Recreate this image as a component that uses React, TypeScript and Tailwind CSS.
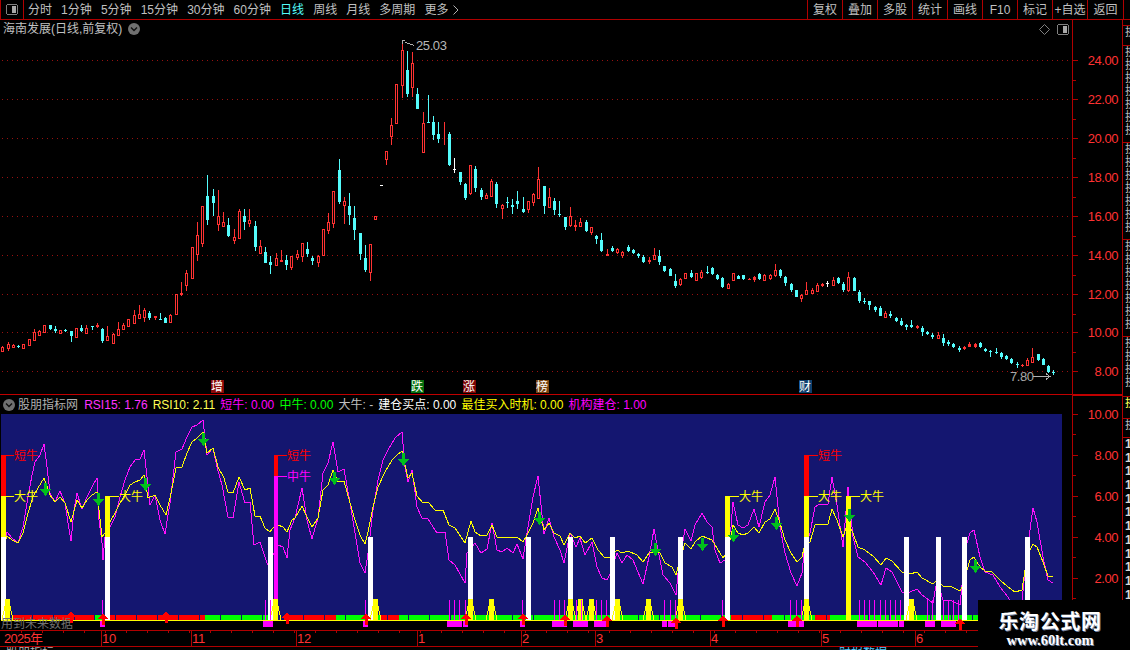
import React from "react";

const RED = "#ff3232";
const CYAN = "#54fcfc";
const LINE = "#b00000";

type C = [number, number, number, number, string?];
const A: C[] = [[618,621,632,632],[606,612,624,632],[613,616,620,620],[615,617,622,624,"c"],[612,613,623,623],[598,598,614,614],[568,576,599,599],[570,573,584,587],[556,556,576,576],[556,556,567,570,"c"],[558,567,572,579,"c"],[570,571,579,581],[566,570,573,577,"c"],[573,573,587,606,"c"],[565,565,590,590],[556,564,573,577,"c"],[556,564,579,582],[558,558,560,570,"c"],[550,555,561,565,"f"],[564,567,602,608,"c"],[559,589,599,600],[578,582,608,608],[546,568,584,584],[549,555,568,570],[538,538,558,560],[511,526,549,551],[495,523,533,533],[505,511,531,546],[514,519,534,540,"c"],[529,529,534,540,"f"],[519,538,540,540,"c"],[532,534,548,549,"c"],[522,525,546,548],[462,462,522,525],[427,460,465,467,"f"],[391,400,434,453],[322,322,413,413],[247,286,341,363],[199,199,308,321],[105,168,240,255,"c"],[148,168,189,229,"c"],[150,228,251,273],[217,247,258,262],[235,255,288,291,"c"],[267,292,300,312],[208,214,293,293],[208,228,246,270,"c"],[208,240,249,262],[244,259,321,333,"c"],[301,319,339,342],[322,336,369,369,"c"],[349,366,375,402,"c"],[340,355,375,378],[331,361,366,366,"f"],[346,360,375,390,"c"],[348,349,381,390],[331,343,351,360],[310,310,347,366],[306,327,343,350,"c"],[349,354,363,375,"c"],[345,349,365,381],[268,268,345,345],[220,247,269,282],[154,154,248,264],[57,91,186,192,"c"],[172,183,194,252],[159,198,225,255,"c"],[198,234,270,300,"c"],[279,279,342,360,"c"],[316,354,390,396,"c"],[313,313,395,423],[229,229,236,236],[135,135,137,137,"w"]];
const B: C[] = [[364,364,386,405],[265,286,317,345],[163,163,278,278],[40,61,164,204],[64,120,192,200,"c"],[67,100,170,200],[175,192,237,237,"c"],[247,280,365,365],[196,276,278,278,"c"],[259,276,315,330,"c"],[277,312,327,339,"c"],[277,320,345,345,"l"],[307,312,405,408,"c"],[385,417,419,428,"w"],[426,426,456,465,"c"],[460,462,504,510,"c"],[405,405,490,496],[408,417,474,486,"c"],[475,480,501,510,"c"],[490,495,505,507],[447,453,497,497],[457,462,522,534,"c"],[523,525,534,567],[501,516,519,534,"c"],[507,525,530,552,"c"],[483,513,522,537,"c"],[501,537,546,549,"c"],[514,514,537,549],[490,492,515,528],[411,447,504,504],[468,468,528,552,"c"],[474,502,531,531],[504,513,540,555,"c"],[514,552,555,561,"c"],[561,561,591,600,"c"],[531,558,585,591],[570,585,592,603,"f"],[564,576,588,591],[570,576,603,606,"c"],[591,591,606,615],[615,618,627,642,"c"],[609,630,663,666,"c"],[657,672,678,678,"f"],[648,655,663,666,"c"],[654,657,666,672],[663,666,675,684],[645,651,663,666,"c"],[657,660,669,672,"c"],[669,672,678,684,"c"],[675,681,696,699,"c"],[681,690,696,702,"f"],[654,675,687,690],[660,678,696,705,"c"]];
const D: C[] = [[108,108,123,126,"c"],[114,117,138,138,"c"],[132,153,168,174,"c"],[144,147,162,168],[129,129,144,144],[120,129,141,144,"c"],[129,129,150,150],[120,126,141,147],[108,126,129,132,"c"],[111,114,132,135,"c"],[132,135,147,150,"c"],[141,144,171,174,"c"],[159,162,174,174],[129,129,150,150],[135,138,147,147,"c"],[135,135,147,150,"c"],[144,147,150,150,"f"],[138,141,150,156,"f"],[129,132,147,150,"c"],[132,135,150,153],[132,135,144,150],[102,120,135,141],[117,120,138,144,"c"],[138,141,159,168,"c"],[159,162,180,186,"c"],[180,180,201,201,"c"],[192,195,204,216],[156,180,192,192],[174,180,189,189],[159,165,183,183],[159,162,168,171,"f"],[153,159,162,171,"w"],[141,150,165,168],[141,144,159,162,"c"],[156,162,180,186,"c"],[126,141,180,186],[141,144,183,183,"c"],[180,186,213,219,"c"],[204,213,216,222,"c"],[213,213,225,240,"c"],[228,231,240,246,"c"],[228,234,258,258,"c"],[243,249,261,264],[243,252,258,264,"c"],[261,264,273,276,"c"],[264,273,285,288,"c"],[282,285,291,300,"c"],[270,285,291,294,"c"],[285,288,294,297,"f"],[288,294,306,318,"c"],[303,306,312,315,"c"],[309,315,321,327,"c"],[306,315,324,327],[312,324,339,348,"c"],[330,336,342,348,"c"],[339,342,351,354,"c"],[348,354,360,366,"c"],[348,351,357,360,"f"],[336,342,351,351,"f"],[339,342,351,354,"f"],[336,339,351,354,"c"],[354,357,363,366,"c"],[360,363,363,381,"c"],[354,366,369,372,"c"],[366,369,381,387,"c"],[375,378,387,390,"c"],[384,387,399,402,"c"],[396,402,405,414,"c"],[402,405,408,411,"f"],[384,390,405,405],[354,381,396,396],[372,372,390,393,"c"],[384,387,405,405,"c"],[405,408,426,429,"c"],[420,426,429,435,"c"]];
const candles = [
  ...A.map((c) => ({ c, off: 140 })),
  ...B.map((c) => ({ c, off: 30 })),
  ...D.map((c) => ({ c, off: 230 })),
];

const mA = [15,395,22,365,35,385,55,400,70,350,80,280,95,195,105,155,120,135,133,103,140,170,150,250,165,275,180,243,195,280,205,340,212,392,222,300,230,250,245,298,260,260,275,230,292,205,298,330,305,400,308,450,315,380,330,350,345,320,360,260,375,210,390,170,405,150,420,147,433,120,440,200,450,285,465,255,480,330,495,373,510,280,528,125,545,118,560,80,575,50,590,45,608,30,620,135,638,115,650,170,665,225,685,320,700,325,718,215,735,280,750,275,762,405,780,395,800,460,805,465,835,405,850,412,860,443,870,360,885,325,905,235,920,330,937,388,955,325,970,190,985,160,1000,97,1015,185,1032,178,1050,280,1065,370,1080,460];
const yA = [15,395,22,378,35,390,55,400,70,370,85,310,100,260,115,235,133,205,150,255,165,275,180,260,195,280,212,335,230,270,245,295,260,270,275,255,292,245,298,300,305,380,315,370,330,335,345,310,360,280,375,255,390,225,405,215,420,210,433,195,445,265,465,255,480,285,497,315,510,265,528,175,545,170,560,130,575,95,590,85,608,65,620,130,638,115,655,170,672,205,685,245,700,250,718,200,735,240,750,235,765,318,780,318,795,355,810,365,818,355,835,345,850,350,860,365,875,330,885,325,905,288,920,320,937,350,955,325,970,240,985,225,1000,180,1015,215,1032,213,1050,280,1065,330,1080,375];
const mB = [15,490,25,430,40,300,55,210,70,150,85,120,105,85,127,65,135,170,143,215,157,180,170,290,185,325,205,328,230,370,255,365,268,450,285,465,315,520,322,430,345,400,362,430,380,418,395,340,410,420,425,425,440,415,458,430,472,403,488,447,500,370,520,260,535,198,552,372,568,325,583,380,600,420,613,460,630,370,648,410,660,385,675,435,695,395,710,470,725,505,740,510,752,485,770,430,785,460,800,435,820,450,850,522,868,440,883,358,895,420,910,495,930,520,947,555,955,490,975,358,992,393,1005,345,1025,310,1040,335,1055,350,1065,420,1080,460];
const yB = [15,403,25,365,40,290,55,230,75,185,95,150,110,135,127,122,143,205,157,190,172,258,190,280,205,277,225,300,250,300,268,345,285,355,315,398,332,332,345,365,362,378,380,375,395,345,410,380,440,382,458,385,472,380,488,395,500,375,520,340,535,295,552,360,568,340,583,370,600,378,613,405,630,368,645,385,660,378,675,400,695,385,715,420,735,445,750,440,770,420,785,428,805,423,830,435,850,457,868,430,883,425,900,430,915,460,935,470,947,495,955,470,975,400,992,417,1005,395,1025,378,1055,390,1080,430];
const mC = [15,450,32,350,40,275,55,345,70,355,85,345,103,298,118,350,135,275,150,255,166,202,180,350,195,430,212,490,230,527,245,490,252,430,270,370,285,290,300,283,323,283,337,200,350,285,368,410,385,232,400,380,415,440,435,455,460,485,482,525,497,473,515,487,530,515,545,545,570,545,590,538,605,555,640,580,650,510,670,570,690,570,720,585,725,525,742,400,750,370,763,360,780,440,795,485,820,495,840,530,865,560,880,590,905,575,915,480,928,380,938,295,952,335,970,440,985,510,998,520];
const yC = [10,445,15,435,32,380,40,345,55,370,70,375,85,368,103,352,118,368,135,335,150,328,166,298,180,340,195,390,212,430,230,455,245,440,252,415,270,395,285,345,300,343,323,343,337,298,350,330,368,380,385,335,400,370,415,410,435,420,460,437,482,465,497,443,515,453,545,487,570,493,590,487,605,505,640,522,650,510,670,527,690,527,720,542,725,530,742,480,750,450,763,440,780,470,795,482,815,485,840,510,865,530,885,545,905,540,915,480,930,420,938,403,952,412,970,455,985,497,998,500];

const pts = (arr: number[], xoff: number) => {
  const out: string[] = [];
  for (let i = 0; i < arr.length; i += 2) out.push(`${Math.round(xoff + arr[i] / 3)},${Math.round(410 + arr[i + 1] / 3)}`);
  return out.join(" ");
};
const magentaPts = [pts(mA, 0), pts(mB, 360), pts(mC, 720)].join(" ");
const yellowPts = [pts(yA, 0), pts(yB, 360), pts(yC, 720)].join(" ");

const ribbon: [number, number, string][] = [[13,95,"#ff0000"],[95,105,"#00ff00"],[110,205,"#ff0000"],[205,268,"#00ff00"],[283,336,"#ff0000"],[336,380,"#00ff00"],[380,399,"#ff0000"],[399,731,"#00ff00"],[731,772,"#ff0000"],[772,815,"#00ff00"],[815,830,"#ff0000"],[830,978,"#00ff00"]];

const bars: [number, number, number, string, number?][] = [
  [1,455,496,"#ff0000"],[1,496,537,"#ffff00"],[1,537,620,"#ffffff"],
  [105,496,537,"#ffff00"],[105,537,620,"#ffffff"],
  [268,537,620,"#ffffff"],[274,455,476,"#ff0000",4],[274,476,620,"#ff00ff",4],
  [368,537,620,"#ffffff"],[468,537,620,"#ffffff"],[526,537,620,"#ffffff"],[568,537,620,"#ffffff"],[610,537,620,"#ffffff"],[678,537,620,"#ffffff"],
  [725,496,537,"#ffff00"],[725,537,620,"#ffffff"],
  [804,455,496,"#ff0000"],[804,496,537,"#ffff00"],[804,537,599,"#ffffff"],
  [846,496,620,"#ffff00"],
  [904,537,620,"#ffffff"],[936,537,620,"#ffffff"],[962,537,620,"#ffffff"],[1025,537,600,"#ffffff"],
];
const pillars = [5,273,373,468,489,568,578,589,615,646,678,804,909];
const blocks: [number, number][] = [[100,105],[263,273],[363,368],[447,462],[463,468],[520,525],[552,567],[573,588],[594,609],[662,667],[668,678],[788,804],[857,877],[878,898],[899,904],[925,935],[941,956]];
const ticks = [102,265,270,365,449,454,459,465,522,554,559,564,576,581,596,601,606,664,670,675,722,790,796,801,859,864,869,874,880,885,890,895,900,927,932,943,948,953,958];
const upArrows: [number, number][] = [[71,611],[103,613],[166,611],[287,612],[366,613],[466,613],[523,613],[565,614],[607,615],[676,617],[723,615],[797,615],[960,618]];
const downArrows: [number, number][] = [[45,483],[98,493],[145,478],[203,433],[334,472],[403,453],[539,512],[655,543],[702,538],[733,529],[776,517],[849,509],[975,560]];
const labels: [number, number, string, string][] = [
  [5,455,"短牛","#ff0000"],[5,496,"大牛","#ffff00"],[110,496,"大牛","#ffff00"],[278,455,"短牛","#ff0000"],[278,476,"中牛","#ff00ff"],[730,496,"大牛","#ffff00"],[809,455,"短牛","#ff0000"],[809,496,"大牛","#ffff00"],[851,496,"大牛","#ffff00"],
];
const marks: [number, string, string][] = [[217,"增","#8b0a0a"],[417,"跌","#06700e"],[469,"涨","#7d0505"],[542,"榜","#7a4310"],[805,"财","#0f406e"]];
const months: [number, string][] = [[3,"2025年"],[101,"10"],[191,"11"],[296,"12"],[417,"1"],[521,"2"],[595,"3"],[710,"4"],[821,"5"],[915,"6"]];
const priceTicks: [number, string][] = [[60,"24.00"],[99,"22.00"],[138,"20.00"],[177,"18.00"],[216,"16.00"],[255,"14.00"],[294,"12.00"],[332,"10.00"],[371,"8.00"]];
const subTicks: [number, string][] = [[414,"10.00"],[455,"8.00"],[496,"6.00"],[537,"4.00"],[578,"2.00"]];
const leftNav = ["分时","1分钟","5分钟","15分钟","30分钟","60分钟","日线","周线","月线","多周期","更多"];
const rightNav = ["复权","叠加","多股","统计","画线","F10","标记","+自选"];
const headerItems: [string, string][] = [
  ["RSI15: 1.76","#ff32ff"],["RSI10: 2.11","#ffff54"],["短牛: 0.00","#ff00ff"],["中牛: 0.00","#00ff00"],["大牛: -","#c0c0c0"],["建仓买点: 0.00","#ffffff"],["最佳买入时机: 0.00","#ffff00"],["机构建仓: 1.00","#ff00ff"],
];

function PanelIcon() {
  return (
    <svg width="12" height="11" viewBox="0 0 12 11" shapeRendering="crispEdges">
      <rect x="0.5" y="0.5" width="11" height="10" rx="2" fill="none" stroke="#808080" />
      <rect x="6" y="2" width="4" height="7" fill="#a8a8a8" />
    </svg>
  );
}
function Chevron() {
  return (
    <svg width="12" height="12" viewBox="0 0 12 12" className="shrink-0">
      <circle cx="6" cy="6" r="6" fill="#707070" />
      <path d="M3 4.5 L6 7.5 L9 4.5" fill="none" stroke="#101010" strokeWidth="1.4" />
    </svg>
  );
}

function PriceChart() {
  return (
    <svg width="1072" height="374" viewBox="0 20 1072 374" shapeRendering="crispEdges" className="block">
      {priceTicks.map(([y]) => (
        <line key={y} x1="2" x2="1072" y1={y + 0.5} y2={y + 0.5} stroke="#981010" strokeDasharray="1 4" />
      ))}
      {candles.map(({ c, off }, i) => {
        const x = Math.round(2.33 + 5.255 * i);
        const [wt, bt, bb, wb, k] = c;
        const y0 = Math.round(off + wt / 3);
        const y1 = Math.round(off + bt / 3);
        const y2 = Math.round(off + bb / 3);
        const y3 = Math.round(off + wb / 3);
        const col = k === "c" ? CYAN : k === "w" ? "#ffffff" : RED;
        const h = Math.max(1, y2 - y1);
        return (
          <g key={i}>
            {y3 > y0 && <rect x={x} y={y0} width="1" height={y3 - y0} fill={col} />}
            {k === "l" ? null : k === "c" || k === "f" || k === "w" || h <= 1 ? (
              <rect x={x - 1} y={y1} width="3" height={h} fill={col} />
            ) : (
              <g>
                <rect x={x - 1} y={y1} width="3" height={h + 1} fill={col} />
                <rect x={x} y={y1 + 1} width="1" height={h - 1} fill="#000000" />
              </g>
            )}
          </g>
        );
      })}
      <path d="M402.5 44 V40.5 H405 M405 42.5 L409 43.5 L414 45.5" fill="none" stroke="#b0b0b0" />
      <text x="416" y="50" fill="#b8b8b8" fontSize="13" letterSpacing="-0.4">25.03</text>
      <text x="1010" y="381" fill="#a8a8a8" fontSize="13" letterSpacing="-0.4">7.80</text>
      <path d="M1033 376.5 H1050 M1046 373.5 L1050 376.5 L1046 379.5" fill="none" stroke="#b0b0b0" />
      {marks.map(([x, t, bg]) => (
        <g key={t}>
          <rect x={x - 6} y="380" width="13" height="13" fill={bg} />
          <text x={x - 6} y="391" fill="#ffffff" fontSize="12" style={{ fontFamily: "'Noto Sans CJK SC', sans-serif" }}>{t}</text>
        </g>
      ))}
    </svg>
  );
}

function IndicatorChart() {
  return (
    <svg width="1072" height="216" viewBox="0 414 1072 216" shapeRendering="crispEdges" className="block">
      <rect x="1" y="414" width="1061" height="206" fill="#141670" />
      {ribbon.map(([a, b, col], i) => (
        <rect key={i} x={a} y="615" width={b - a} height="5" fill={col} />
      ))}
      {Array.from({ length: 47 }, (_, i) => (
        <rect key={i} x={Math.round(10.8 + 20.9 * i)} y="615" width="1" height="5" fill="#141670" />
      ))}
      <polyline points={magentaPts} fill="none" stroke="#ff10ff" />
      <polyline points={yellowPts} fill="none" stroke="#ffff00" />
      {bars.map(([x, t, b, col, w], i) => (
        <rect key={i} x={x} y={t} width={w ?? 5} height={b - t} fill={col} />
      ))}
      {pillars.map((x) => (
        <g key={x}>
          <rect x={x} y="599" width="5" height="21" fill="#ffff00" />
          <polyline points={`${x - 3},620 ${x},606 ${x + 5},606 ${x + 8},620`} fill="none" stroke="#ffff00" />
        </g>
      ))}
      {ticks.map((x) => (
        <rect key={x} x={x} y="600" width="1" height="20" fill="#ff00ff" />
      ))}
      <rect x="1" y="620" width="977" height="1" fill="#ffff00" />
      {blocks.map(([a, b]) => (
        <rect key={a} x={a} y="621" width={b - a} height="6" fill="#ff00ff" />
      ))}
      <text x="1" y="628" fill="#707070" fontSize="12" style={{ fontFamily: "'Noto Sans CJK SC', sans-serif" }}>用到未来数据</text>
      {upArrows.map(([x, y]) => (
        <path key={x} d={`M${x} ${y} L${x + 5} ${y + 6} H${x + 2} V${y + 12} H${x - 1} V${y + 6} H${x - 5} Z`} fill="#ff0000" />
      ))}
      {labels.map(([x, y, t, col], i) => (
        <g key={i}>
          <rect x={x} y={y} width="9" height="1" fill={col} />
          <text x={x + 9} y={y + 5} fill={col} fontSize="12" style={{ fontFamily: "'Noto Sans CJK SC', sans-serif" }}>{t}</text>
        </g>
      ))}
      {downArrows.map(([x, y]) => (
        <path key={x} d={`M${x - 1} ${y} H${x + 2} V${y + 6} H${x + 6} L${x + 0.5} ${y + 13} L${x - 5} ${y + 6} H${x - 1} Z`} fill="#00c01c" />
      ))}
    </svg>
  );
}

function TimeAxis() {
  return (
    <svg width="1072" height="16" viewBox="0 630 1072 16" shapeRendering="crispEdges" className="block">
      <rect x="0" y="630" width="1072" height="1" fill={LINE} />
      {Array.from({ length: 51 }, (_, i) => (
        <rect key={i} x={Math.round(21 + 21 * i)} y="631" width="1" height="2" fill={LINE} />
      ))}
      {months.map(([x, t]) => (
        <g key={t}>
          {x > 3 && <rect x={x} y="631" width="1" height="15" fill={LINE} />}
          <text x={x + 1} y="643" fill={RED} fontSize="13" letterSpacing={x === 3 ? "-0.7" : "-0.3"}>{t}</text>
        </g>
      ))}
    </svg>
  );
}

function ValueAxis() {
  const sub = [434, 475, 516, 557, 598];
  return (
    <svg width="49" height="630" viewBox="1073 20 49 630" shapeRendering="crispEdges" className="block">
      {[80, 119, 158, 197, 236, 275, 314, 352].map((y) => (
        <rect key={y} x="1073" y={y} width="3" height="1" fill={LINE} />
      ))}
      {sub.map((y) => (
        <rect key={y} x="1073" y={y} width="3" height="1" fill={LINE} />
      ))}
      {[...priceTicks, ...subTicks].map(([y, t]) => (
        <g key={y}>
          <rect x="1073" y={y} width="5" height="1" fill={LINE} />
          <text x="1118" y={y + 5} textAnchor="end" fill={RED} fontSize="13" letterSpacing="-0.45">{t}</text>
        </g>
      ))}
      <rect x="1073" y="394" width="49" height="2" fill="#c00000" />
    </svg>
  );
}

function SideRow({ h, n, color = "#b8b8b8", ch = "换" }: { h: number; n: number; color?: string; ch?: string }) {
  return (
    <div style={{ height: h }} className="border-b border-[#b00000] overflow-hidden pl-[2px] leading-[13px] shrink-0" >
      {Array.from({ length: n }, (_, i) => (
        <div key={i} className="h-[13px] whitespace-nowrap" style={{ color }}>{ch}</div>
      ))}
    </div>
  );
}

export default function App() {
  return (
    <div className="relative flex h-[650px] w-[1130px] flex-col overflow-hidden bg-black text-[12px] leading-none text-[#c0c0c0] font-['Liberation_Sans','Noto_Sans_CJK_SC',sans-serif]">
      <div className="flex h-[20px] shrink-0 border-b border-[#b00000]">
        <div className="flex w-[24px] shrink-0 items-center justify-center border-x border-[#b00000]">
          <PanelIcon />
        </div>
        <div className="flex flex-1 items-center gap-[9.1px] pl-[4px]">
          {leftNav.map((t) => (
            <span key={t} className={t === "日线" ? "text-[#54fcfc]" : ""}>{t}</span>
          ))}
          <svg width="6" height="10" viewBox="0 0 6 10" className="-ml-[5px]">
            <path d="M0.5 0.5 L5 5 L0.5 9.5" fill="none" stroke="#b0b0b0" />
          </svg>
        </div>
        {rightNav.map((t) => (
          <div key={t} className="flex w-[35px] items-center justify-center border-l border-[#b00000]">{t}</div>
        ))}
        <div className="flex w-[37px] items-center justify-center border-x border-[#b00000]">返回</div>
        <div className="w-[6px]" />
      </div>

      <div className="flex min-h-0 flex-1">
        <div className="w-[1072px] shrink-0">
          <div className="relative h-[375px] border-b border-[#c00000]">
            <PriceChart />
            <div className="absolute left-[3px] top-[3px] flex items-center gap-[6px]">
              <span>海南发展(日线,前复权)</span>
              <Chevron />
            </div>
            <div className="absolute right-[3px] top-[4px] flex items-center gap-[7px]">
              <svg width="11" height="11" viewBox="0 0 11 11">
                <path d="M5.5 0.5 L10.5 5.5 L5.5 10.5 L0.5 5.5 Z" fill="none" stroke="#808080" />
              </svg>
              <PanelIcon />
            </div>
          </div>
          <div className="flex h-[19px] items-center gap-[5.1px] pl-[3px]">
            <Chevron />
            <span className="ml-[-2px] mr-[1px] text-[#b0b0b0]">股朋指标网</span>
            {headerItems.map(([t, c]) => (
              <span key={t} style={{ color: c }} className="whitespace-nowrap">{t}</span>
            ))}
          </div>
          <IndicatorChart />
          <TimeAxis />
          <div className="h-[4px] overflow-hidden border-t border-[#b00000] pl-[6px] text-[#b0b0b0] leading-[12px]">
            股朋指标
            <span className="ml-[785px] text-[#54c8fc]">财报数据</span>
          </div>
        </div>

        <div className="w-[51px] shrink-0 border-x border-[#b00000]">
          <ValueAxis />
        </div>

        <div className="flex min-w-0 flex-1 flex-col">
          <SideRow h={6} n={0} />
          <SideRow h={20} n={1} />
          <SideRow h={97} n={7} />
          <SideRow h={97} n={7} />
          <SideRow h={97} n={7} />
          <SideRow h={60} n={4} />
          <SideRow h={22} n={1} color="#ffff54" />
          <SideRow h={19} n={1} />
          <div className="overflow-hidden pl-[2px] text-[#d8d8d8]">
            {Array.from({ length: 12 }, (_, i) => (
              <div key={i} className="h-[13.7px] leading-[13.7px] font-bold">1</div>
            ))}
          </div>
        </div>
      </div>

      <div className="absolute bottom-0 right-0 flex h-[50px] w-[152px] flex-col items-center bg-black pt-[9px] pr-[8px]">
        <div className="text-[20px] leading-[24px] font-bold tracking-[0.6px] text-white [text-shadow:1px_1px_0_#7080a0] font-['Noto_Sans_CJK_SC',sans-serif]">乐淘公式网</div>
        <div className="text-[14.5px] leading-[15px] font-bold text-white [text-shadow:1px_1px_0_#7080a0] font-['Liberation_Serif',serif]">www.60lt.com</div>
      </div>
    </div>
  );
}
